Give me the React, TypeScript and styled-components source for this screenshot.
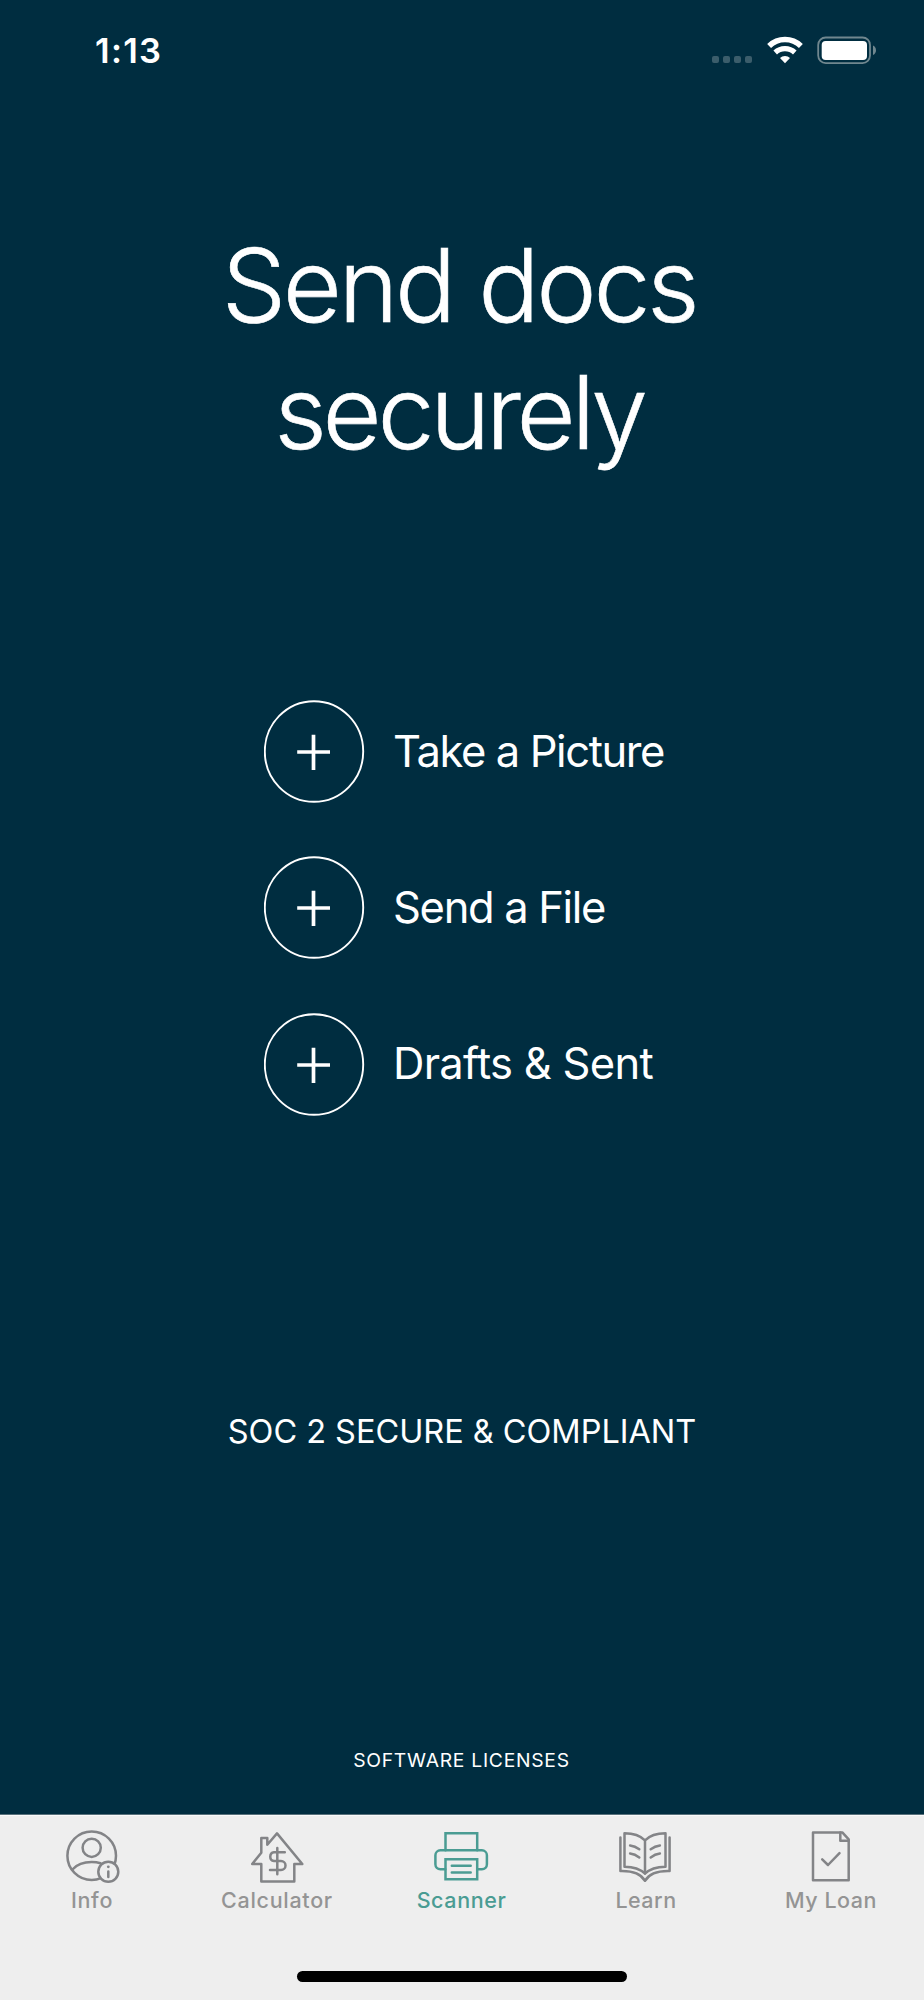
import React from "react";
import styled, { createGlobalStyle } from "styled-components";

const navy = "#002d40";
const barGray = "#eeeeee";

const GlobalStyle = createGlobalStyle`
  * { box-sizing: border-box; }
  body { margin: 0; background: ${navy}; }
`;

const Screen = styled.div`
  width: 924px;
  height: 2000px;
  display: flex;
  flex-direction: column;
  background: ${navy};
  color: #fff;
  font-family: Inter, "Liberation Sans", sans-serif;
  overflow: hidden;
`;

const StatusBar = styled.header`
  height: 100px;
  padding: 30px 48px 0 95px;
  display: flex;
  justify-content: space-between;
  align-items: flex-start;
`;

const Time = styled.span`
  font-size: 34.5px;
  font-weight: 600;
  line-height: 42px;
  letter-spacing: 1.3px;
`;

const StatusIcons = styled.div`
  display: flex;
  align-items: flex-start;
  padding-top: 6px;
`;

const SignalDots = styled.div`
  display: flex;
  gap: 4px;
  margin: 20px 14px 0 0;
`;

const Dot = styled.i`
  width: 7px;
  height: 7px;
  border-radius: 2px;
  background: #3b5d6b;
`;

const Wifi = styled.svg`
  width: 38px;
  height: 28px;
  margin-right: 13px;
`;

const Battery = styled.svg`
  width: 59px;
  height: 28px;
`;

const Main = styled.main`
  flex: 1;
  display: flex;
  flex-direction: column;
  align-items: center;
`;

const Title = styled.h1`
  margin: 122px 0 0;
  padding-right: 6px;
  font-size: 102px;
  font-weight: 300;
  line-height: 127.3px;
  text-align: center;
  -webkit-text-stroke: 0.6px #fff;
`;

const TitleLine = styled.span<{ $spacing: number }>`
  display: block;
  letter-spacing: ${(p) => p.$spacing}px;
`;

const Actions = styled.div`
  width: 396px;
  margin-top: 223.7px;
  display: flex;
  flex-direction: column;
  gap: 53.6px;
`;

const Action = styled.button`
  height: 102.7px;
  padding: 0;
  border: 0;
  background: none;
  color: inherit;
  font-family: inherit;
  display: flex;
  align-items: center;
  gap: 28px;
  text-align: left;
`;

const PlusCircle = styled.svg`
  width: 101px;
  height: 103px;
  flex: none;
`;

const ActionLabel = styled.span<{ $spacing: number }>`
  font-size: 43.5px;
  line-height: 54px;
  padding-bottom: 1.4px;
  white-space: nowrap;
  letter-spacing: ${(p) => p.$spacing}px;
`;

const Compliance = styled.p`
  margin: 296.2px 0 0;
  font-size: 32.5px;
  line-height: 40px;
  letter-spacing: -0.03px;
`;

const Licenses = styled.a`
  margin-top: 296.1px;
  padding-right: 1px;
  font-size: 19.3px;
  line-height: 24px;
  letter-spacing: 0.73px;
`;

const TabBar = styled.nav`
  height: 186px;
  border-top: 1px solid #58717c;
  background: ${barGray};
  box-shadow: inset 0 1px #fafafa;
  display: flex;
  flex-direction: column;
  align-items: center;
`;

const Tabs = styled.div`
  width: 100%;
  padding-top: 11px;
  display: grid;
  grid-template-columns: 185px 185px 184px 185px 185px;
`;

const Tab = styled.a<{ $active?: boolean }>`
  display: flex;
  flex-direction: column;
  align-items: center;
  color: ${(p) => (p.$active ? "#4a9c93" : "#949494")};
`;

const TabIcon = styled.svg<{ $active?: boolean }>`
  width: ${(p) => (p.$active ? 60 : 61)}px;
  height: 60px;
  fill: none;
  stroke: ${(p) => (p.$active ? "#4a9c93" : "#838487")};
  stroke-width: 2.5;
  stroke-linejoin: round;
  stroke-linecap: round;
`;

const TabLabel = styled.span<{ $spacing: number }>`
  font-size: 21.5px;
  font-weight: 480;
  line-height: 26px;
  margin: 1px 1px 0 0;
  white-space: nowrap;
  letter-spacing: ${(p) => p.$spacing}px;
`;

const HomeIndicator = styled.div`
  width: 330px;
  height: 11px;
  margin-top: auto;
  margin-bottom: 18px;
  border-radius: 6px;
  background: #000;
`;

const InfoIcon = (
  <>
    <circle cx="29.7" cy="29.7" r="24.3" />
    <circle cx="29.7" cy="21.8" r="9.1" />
    <path d="M10.7 43.3Q17 36 29.7 36Q34.5 36 38.5 37.3" />
    <circle cx="46.3" cy="45.8" r="10" fill={barGray} />
    <path d="M46.3 45.6V51" />
    <path d="M46.3 40.8h.01" strokeWidth="2.8" />
  </>
);

const HouseIcon = (
  <>
    <path d="M30 7.4L55.3 38H47.3V55.4H14.3V38H5.2L14.3 26.7V11.9H20.3V18.7Z" />
    <path d="M30.3 21.9V48.3M37.8 26.3H27A4.4 4.4 0 0 0 27 35H34A4.5 4.5 0 0 1 34 44H23" />
  </>
);

const PrinterIcon = (
  <>
    <path strokeLinejoin="miter" d="M13.5 24.3V7.2H45.2V24.3" />
    <path d="M13.3 43.3H8.4A5 5 0 0 1 3.4 38.3V29.3A5 5 0 0 1 8.4 24.3H49.9A5 5 0 0 1 54.9 29.3V38.3A5 5 0 0 1 49.9 43.3H45.3" />
    <path strokeLinejoin="miter" d="M13.5 33.3H45.2V53.3H13.5Z" />
    <path d="M19.8 39.7H38.7M19.8 46.4H38.7" />
  </>
);

const BookIcon = (
  <>
    <path d="M29 14.3Q22 7.2 8.5 7.2V40.7Q22 40.7 29 47.7Q36 40.7 49.5 40.7V7.2Q36 7.2 29 14.3V47.7" />
    <path d="M4.4 11.4V45Q23 44.5 29 54.8Q35 44.5 53.6 45V11.4" />
    <path d="M14.1 19.4Q19 20 23.3 23.2M14.1 27.5Q19 28.1 23.3 31.4M43.9 19.4Q39 20 34.7 23.2M43.9 27.5Q39 28.1 34.7 31.4" />
  </>
);

const LoanIcon = (
  <>
    <path d="M12 6.4H41.3L47.7 13.3V54.3H12Z" />
    <path d="M39.3 6.5V14.8H47.6" />
    <path d="M21.2 33.3L27 39L38.5 27.1" />
  </>
);

const actions = [
  { label: "Take a Picture", spacing: -1.4 },
  { label: "Send a File", spacing: -1.32 },
  { label: "Drafts & Sent", spacing: -0.72 },
];

const tabs = [
  { label: "Info", icon: InfoIcon, spacing: 0.7 },
  { label: "Calculator", icon: HouseIcon, spacing: 0.7 },
  { label: "Scanner", icon: PrinterIcon, spacing: 0.6, active: true },
  { label: "Learn", icon: BookIcon, spacing: 0.5 },
  { label: "My Loan", icon: LoanIcon, spacing: 0.55 },
];

export default function App() {
  return (
    <Screen>
      <GlobalStyle />
      <StatusBar>
        <Time>1:13</Time>
        <StatusIcons>
          <SignalDots>
            <Dot />
            <Dot />
            <Dot />
            <Dot />
          </SignalDots>
          <Wifi viewBox="0 0 38 28" fill="none" stroke="#fff">
            <path d="M3.1 9.9A23 23 0 0 1 34.9 9.9" strokeWidth="5.6" />
            <path d="M9.2 16.5A14.2 14.2 0 0 1 28.8 16.5" strokeWidth="5.2" />
            <path d="M14 22A7 7 0 0 1 24 22L19 27.3Z" fill="#fff" stroke="none" />
          </Wifi>
          <Battery viewBox="0 0 59 28">
            <rect x="1.2" y="1.5" width="51.8" height="25.6" rx="7.5" fill="none" stroke="#70878f" strokeWidth="1.8" />
            <rect x="4.7" y="5" width="45.3" height="19" rx="4" fill="#fff" />
            <path d="M56 9.5Q59 11 59 14.3T56 19.1Z" fill="#70878f" />
          </Battery>
        </StatusIcons>
      </StatusBar>
      <Main>
        <Title>
          <TitleLine $spacing={-3.4}>Send docs</TitleLine>
          <TitleLine $spacing={-4.3}>securely</TitleLine>
        </Title>
        <Actions>
          {actions.map((a) => (
            <Action key={a.label}>
              <PlusCircle viewBox="0 0 101 103" fill="none" stroke="#fff">
                <ellipse cx="50" cy="51.5" rx="49.2" ry="50.3" strokeWidth="1.9" />
                <path d="M33.2 52H66M49.5 34.7V70" strokeWidth="3.7" />
              </PlusCircle>
              <ActionLabel $spacing={a.spacing}>{a.label}</ActionLabel>
            </Action>
          ))}
        </Actions>
        <Compliance>SOC 2 SECURE &amp; COMPLIANT</Compliance>
        <Licenses>SOFTWARE LICENSES</Licenses>
      </Main>
      <TabBar>
        <Tabs>
          {tabs.map((t) => (
            <Tab key={t.label} $active={t.active}>
              <TabIcon $active={t.active} viewBox={t.active ? "0 0 60 60" : "0 0 61 60"}>
                {t.icon}
              </TabIcon>
              <TabLabel $spacing={t.spacing}>{t.label}</TabLabel>
            </Tab>
          ))}
        </Tabs>
        <HomeIndicator />
      </TabBar>
    </Screen>
  );
}
